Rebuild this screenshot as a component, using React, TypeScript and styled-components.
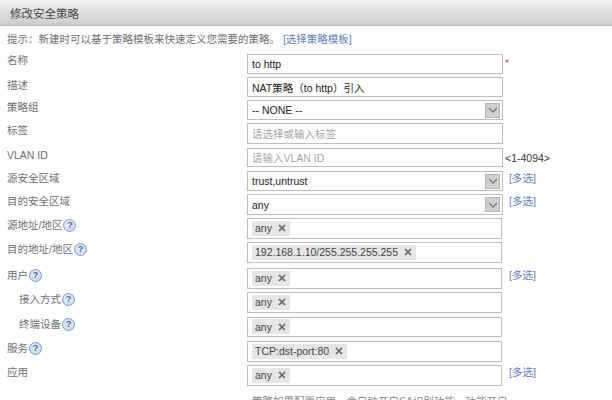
import React from "react";
import styled, { createGlobalStyle } from "styled-components";

const Global = createGlobalStyle`
  html, body { margin: 0; padding: 0; background: #fff; overflow: hidden; }
  body { font-family: "Liberation Sans", "Noto Sans CJK SC", sans-serif; font-size: 10.5px; color: #333; }
  * { box-sizing: border-box; }
`;

const Page = styled.div`
  width: 612px;
  height: 400px;
  overflow: hidden;
`;

const Header = styled.div`
  height: 26px;
  padding-left: 10px;
  display: flex;
  align-items: center;
  font-size: 11.5px;
  color: #444;
  background: linear-gradient(#f1f1f1, #cdcdcd);
  border-bottom: 1px solid #bbb;
`;

const Hint = styled.div`
  height: 28px;
  padding: 6px 0 0 7px;
  line-height: 14px;
  color: #6e6e6e;
`;

const LinkText = styled.span`
  color: #5f7cc0;
`;

const Form = styled.div`
  display: flex;
  flex-direction: column;
`;

const Row = styled.div<{ $h: number; $gap: number }>`
  display: grid;
  grid-template-columns: 247px 256px 1fr;
  height: ${(p) => p.$h}px;
  margin-bottom: ${(p) => p.$gap}px;
`;

const Label = styled.div<{ $indent?: boolean; $top: number }>`
  display: flex;
  align-items: flex-start;
  padding-left: ${(p) => (p.$indent ? 19 : 7)}px;
  padding-top: ${(p) => p.$top}px;
  line-height: 13px;
  color: #6e6e6e;
`;

const Help = styled.span`
  width: 13px;
  height: 13px;
  margin-left: 1px;
  border-radius: 50%;
  border: 1px solid #7d9ccb;
  background: radial-gradient(circle at 50% 40%, #f2f6fc, #bcd0ec);
  color: #3d63a3;
  font-size: 9px;
  font-weight: bold;
  line-height: 11px;
  text-align: center;
`;

const Field = styled.div<{ $placeholder?: boolean; $wide?: boolean }>`
  height: 100%;
  width: ${(p) => (p.$wide ? 256 : 255)}px;
  display: flex;
  align-items: center;
  gap: 4px;
  padding: 0 4px;
  background: #fff;
  border: 1px solid #bdbdbd;
  color: ${(p) => (p.$placeholder ? "#a3a3a3" : "#222")};
`;

const PlainText = styled.span`
  flex: 1;
`;

const TagChip = styled.span`
  height: 15px;
  margin-top: -1px;
  display: inline-flex;
  align-items: center;
  gap: 6px;
  padding: 0 4px 0 3px;
  background: #e6e6e6;
  color: #444;
`;

const Arrow = styled.span`
  width: 15px;
  height: 15px;
  margin-right: -2px;
  display: flex;
  align-items: center;
  justify-content: center;
  background: #d0d0d0;
  border: 1px solid #b5b5b5;
`;

const Side = styled.div`
  padding: 0 0 0 2px;
  line-height: 13px;
  color: #333;
`;

const SideLink = styled(LinkText)`
  display: block;
  padding-left: 4px;
  margin-top: 1px;
`;

const Required = styled.span`
  display: block;
  color: #d9534f;
  line-height: 18px;
  font-size: 10px;
  padding-top: 1px;
`;

const Range = styled.span`
  display: block;
  padding-top: 4px;
`;

const Note = styled.div`
  padding-left: 252px;
  color: #888;
  white-space: nowrap;
  line-height: 14px;
`;

const Close = () => (
  <svg width="8" height="8" viewBox="0 0 8 8">
    <path d="M1 1 L7 7 M7 1 L1 7" stroke="#666" strokeWidth="1.7" />
  </svg>
);

const Chevron = () => (
  <svg width="10" height="6" viewBox="0 0 10 6">
    <path d="M1 1 L5 5 L9 1" fill="none" stroke="#777" strokeWidth="1.3" />
  </svg>
);

type RowDef = {
  label: string;
  h: number;
  gap: number;
  top?: number;
  indent?: boolean;
  help?: boolean;
  text?: string;
  placeholder?: boolean;
  select?: boolean;
  tag?: string;
  side?: "link" | "req" | "range";
};

const rows: RowDef[] = [
  { label: "名称", h: 20, gap: 3, top: 0, text: "to http", side: "req" },
  { label: "描述", h: 20, gap: 3, top: 2, text: "NAT策略（to http）引入" },
  { label: "策略组", h: 20, gap: 3, text: "-- NONE --", select: true },
  { label: "标签", h: 21, gap: 4, text: "请选择或输入标签", placeholder: true },
  { label: "VLAN ID", h: 19, gap: 4, text: "请输入VLAN ID", placeholder: true, side: "range" },
  { label: "源安全区域", h: 20, gap: 3, text: "trust,untrust", select: true, side: "link" },
  { label: "目的安全区域", h: 21, gap: 3, text: "any", select: true, side: "link" },
  { label: "源地址/地区", h: 21, gap: 3, help: true, tag: "any" },
  { label: "目的地址/地区", h: 21, gap: 5, help: true, tag: "192.168.1.10/255.255.255.255" },
  { label: "用户", h: 21, gap: 3, help: true, tag: "any", side: "link" },
  { label: "接入方式", h: 21, gap: 4, indent: true, help: true, tag: "any" },
  { label: "终端设备", h: 20, gap: 4, indent: true, help: true, tag: "any" },
  { label: "服务", h: 21, gap: 3, help: true, tag: "TCP:dst-port:80" },
  { label: "应用", h: 21, gap: 8, tag: "any", side: "link" },
];

export default function App() {
  return (
    <Page>
      <Global />
      <Header>修改安全策略</Header>
      <Hint>
        提示：新建时可以基于策略模板来快速定义您需要的策略。 <LinkText>[选择策略模板]</LinkText>
      </Hint>
      <Form>
        {rows.map((r) => (
          <Row key={r.label} $h={r.h} $gap={r.gap}>
            <Label $indent={r.indent} $top={r.top ?? 1}>
              {r.label}
              {r.help && <Help>?</Help>}
            </Label>
            <Field $placeholder={r.placeholder} $wide={r.select || !r.tag}>
              {r.tag ? (
                <TagChip>
                  {r.tag}
                  <Close />
                </TagChip>
              ) : (
                <PlainText>{r.text}</PlainText>
              )}
              {r.select && (
                <Arrow>
                  <Chevron />
                </Arrow>
              )}
            </Field>
            <Side>
              {r.side === "link" && <SideLink>[多选]</SideLink>}
              {r.side === "req" && <Required>*</Required>}
              {r.side === "range" && <Range>&lt;1-4094&gt;</Range>}
            </Side>
          </Row>
        ))}
      </Form>
      <Note>策略如果配置应用，会自动开启SA识别功能，功能开启</Note>
    </Page>
  );
}
